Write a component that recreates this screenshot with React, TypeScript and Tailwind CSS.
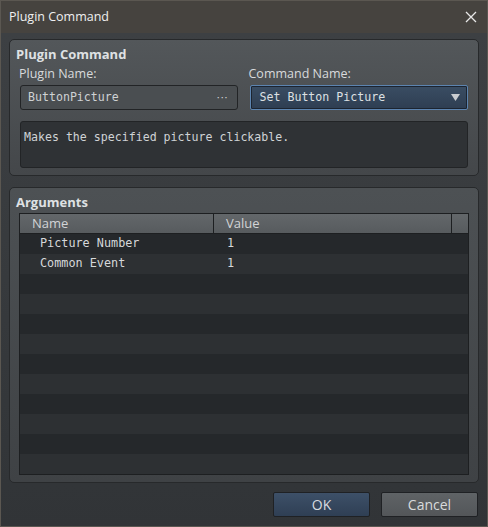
import React from 'react';

const mono = { fontFamily: '"DejaVu Sans Mono", "Liberation Mono", monospace' };

const rows = [
    { name: 'Picture Number', value: '1' },
    { name: 'Common Event', value: '1' },
];

export default function App() {
    const blank = Array.from({ length: 10 });

    return (
        <div
            className="w-[488px] h-[527px] border border-[#5b5751] bg-[#35383a] flex flex-col text-[#d4d6d8] overflow-hidden"
            style={{ fontFamily: '"Open Sans", "Noto Sans", sans-serif' }}
        >
            {/* Title bar */}
            <div className="h-[32px] shrink-0 bg-[#46433f] flex items-center justify-between pl-[8px] pr-[10px]">
                <span className="text-[12.5px] text-[#f0f0f0]">Plugin Command</span>
                <svg width="12" height="12" viewBox="0 0 12 12" className="text-[#e8e8e8]">
                    <path d="M1 1 L11 11 M11 1 L1 11" stroke="currentColor" strokeWidth="1.3" />
                </svg>
            </div>

            {/* Body */}
            <div className="flex-1 min-h-0 flex flex-col px-[8px] pt-[6px] pb-[9px] bg-gradient-to-b from-[#3d4043] to-[#313437]">
                {/* Plugin Command group */}
                <div className="h-[137px] shrink-0 rounded-[5px] border border-[#27292b] bg-gradient-to-b from-[#53575a] to-[#44474a] px-[10px] pt-[5px] flex flex-col">
                    <div className="text-[13px] font-bold text-[#dfe1e3] -ml-[4px] leading-[18px]">Plugin Command</div>
                    <div className="flex gap-[12px] mt-[2px]">
                        <div className="w-[218px] flex flex-col">
                            <span className="text-[12.5px] leading-[18px] text-[#d8dadc] -ml-[1px]">Plugin Name:</span>
                            <div className="mt-[2px] h-[25px] rounded-[3px] border border-[#222426] bg-[#4a4e51] flex items-center justify-between pl-[7px] pr-[8px]">
                                <span className="text-[11.6px] text-[#cfd2d4]" style={mono}>ButtonPicture</span>
                                <span className="text-[11px] text-[#d0d2d4] tracking-[1px]">···</span>
                            </div>
                        </div>
                        <div className="w-[219px] flex flex-col">
                            <span className="text-[12.5px] leading-[18px] text-[#d8dadc] -ml-[1px]">Command Name:</span>
                            <div className="mt-[2px] h-[25px] rounded-[2px] border border-[#5c84b0] bg-gradient-to-b from-[#3a4d63] to-[#2e3e52] flex items-center justify-between pl-[9px] pr-[7px] shadow-[inset_0_0_0_1px_#1c2430]">
                                <span className="text-[11.6px] text-[#dde0e3]" style={mono}>Set Button Picture</span>
                                <svg width="9" height="7" viewBox="0 0 9 7">
                                    <path d="M0 0 H9 L4.5 7 Z" fill="#c9ccd0" />
                                </svg>
                            </div>
                        </div>
                    </div>
                    <div className="mt-[11px] h-[47px] rounded-[3px] border border-[#222426] bg-[#2f3235] px-[3px] pt-[4px] leading-[18px]">
                        <span className="text-[11.6px] text-[#d0d3d5]" style={mono}>Makes the specified picture clickable.</span>
                    </div>
                </div>

                {/* Arguments group */}
                <div className="mt-[11px] flex-1 min-h-0 rounded-[5px] border border-[#27292b] bg-gradient-to-b from-[#4d5154] to-[#3f4245] px-[9px] pt-[5px] pb-[7px] flex flex-col">
                    <div className="text-[13px] font-bold text-[#dfe1e3] -ml-[3px] leading-[18px]">Arguments</div>
                    <div className="mt-[2px] flex-1 min-h-0 border border-[#1d1f21] bg-[#2d3033] flex flex-col overflow-hidden">
                        <div className="h-[20px] shrink-0 flex bg-gradient-to-b from-[#63676a] to-[#575b5e] border-b border-[#1d1f21] text-[13px] text-[#d2d4d6]">
                            <div className="w-[194px] border-r border-[#1d1f21] pl-[12px] leading-[19px]">Name</div>
                            <div className="flex-1 border-r border-[#1d1f21] pl-[12px] leading-[19px]">Value</div>
                            <div className="w-[16px]" />
                        </div>
                        {rows.map((row, i) => (
                            <div
                                key={row.name}
                                className={`h-[20px] shrink-0 flex items-center text-[11.8px] text-[#d6d8da] ${i % 2 === 0 ? 'bg-[#25282b]' : 'bg-[#2d3033]'}`}
                                style={mono}
                            >
                                <div className="w-[194px] pl-[20px]">{row.name}</div>
                                <div className="flex-1 pl-[13px]">{row.value}</div>
                            </div>
                        ))}
                        {blank.map((_, i) => (
                            <div
                                key={i}
                                className={`h-[20px] shrink-0 ${i % 2 === 0 ? 'bg-[#25282b]' : 'bg-[#2d3033]'}`}
                            />
                        ))}
                    </div>
                </div>

                {/* Buttons */}
                <div className="mt-[9px] shrink-0 flex justify-end gap-[11px] pr-[1px]">
                    <button className="w-[97px] h-[25px] rounded-[2px] border border-[#1f2124] bg-gradient-to-b from-[#3d5068] to-[#2f3f54] text-[14px] text-[#d8dce0]">
                        OK
                    </button>
                    <button className="w-[97px] h-[25px] rounded-[2px] border border-[#1f2124] bg-gradient-to-b from-[#5f6366] to-[#535659] text-[14px] text-[#d8dadc]">
                        Cancel
                    </button>
                </div>
            </div>
        </div>
    );
}
